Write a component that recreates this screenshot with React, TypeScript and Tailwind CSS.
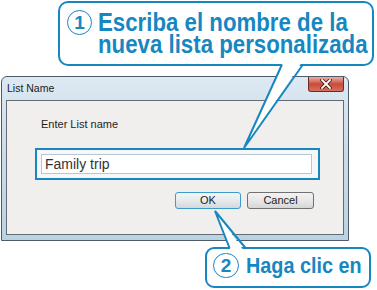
import React from 'react';

function Circled({ n, size }: { n: string; size: 'lg' | 'md' }) {
  return (
    <div
      className={
        size === 'lg'
          ? 'flex h-[25px] w-[25px] shrink-0 items-center justify-center rounded-full border-[1.5px] border-[#1787c2] text-[19px] font-bold leading-none text-[#1787c2]'
          : 'flex h-[25px] w-[26px] shrink-0 items-center justify-center rounded-full border-[1.5px] border-[#1787c2] text-[19px] font-bold leading-none text-[#1787c2]'
      }
    >
      {n}
    </div>
  );
}

function CloseButton() {
  return (
    <div className="flex h-[15px] w-[36px] items-center justify-center rounded-b-[3px] border border-t-0 border-[#6e2b23] bg-gradient-to-b from-[#eab0a5] via-[#c94a3b] to-[#d7705d]">
      <svg width="12" height="10" viewBox="0 0 12 10">
        <path d="M2 1 L10 9 M10 1 L2 9" stroke="#4a1a14" strokeWidth="3.4" strokeLinecap="square" />
        <path d="M2 1 L10 9 M10 1 L2 9" stroke="#ffffff" strokeWidth="1.8" strokeLinecap="square" />
      </svg>
    </div>
  );
}

function Dialog() {
  return (
    <div className="ml-[1px] mt-[76px] flex h-[165px] w-[348px] flex-col rounded-t-[6px] border border-[#4f5c68] bg-gradient-to-b from-[#dde9f2] via-[#c9dbe8] to-[#bad3e3]">
      {/* title bar */}
      <div className="flex h-[23px] items-start justify-between pl-[5px] pr-[4px]">
        <span className="mt-[5px] text-[10.5px] leading-[13px] text-[#1b1b1b]">List Name</span>
        <CloseButton />
      </div>

      {/* client area */}
      <div className="mx-[4px] flex-1 border border-[#666c73] bg-[#f0efed] pl-[28px] pt-[17px]">
        <p className="pl-[6px] text-[11px] leading-[13px] text-[#1e1e1e]">Enter List name</p>

        <div className="mt-[17px] w-[285px] border-2 border-[#1787c2] bg-[#f7f7f7] py-[4px] pl-[4px] pr-[6px]">
          <div className="flex h-[20px] items-center border border-[#b8c7d3] bg-white pl-[3px] text-[14px] text-[#333333]">
            Family trip
          </div>
        </div>

        <div className="mt-[12px] flex gap-[6px] pl-[140px]">
          <button className="flex h-[17px] w-[66px] items-center justify-center rounded-[3px] border border-[#3d9bc9] bg-gradient-to-b from-[#f4f6f7] via-[#e7eaec] to-[#d4d8dc] text-[11px] leading-none text-[#1e1e1e]">
            OK
          </button>
          <button className="flex h-[17px] w-[67px] items-center justify-center rounded-[3px] border border-[#707070] bg-gradient-to-b from-[#f3f3f3] via-[#e8e8e8] to-[#d6d6d6] text-[11px] leading-none text-[#1e1e1e]">
            Cancel
          </button>
        </div>
      </div>
      <div className="h-[5px]" />
    </div>
  );
}

export default function App() {
  return (
    <div className="relative h-[290px] w-[377px] overflow-hidden bg-white font-['Liberation_Sans',Arial,sans-serif]">
      <Dialog />

      {/* callout 1 */}
      <div className="absolute left-[58px] top-[1px] flex h-[65px] w-[316px] items-start rounded-[10px] border-2 border-[#1787c2] bg-white pl-[7px] pt-[7px]">
        <Circled n="1" size="lg" />
        <div className="ml-[6px] mt-[2px] origin-left scale-x-[0.89] whitespace-nowrap text-[25px] font-bold leading-[21.6px] text-[#1787c2]">
          Escriba el nombre de la
          <br />
          nueva lista personalizada
        </div>
      </div>

      {/* callout 2 */}
      <div className="absolute left-[205px] top-[247px] flex h-[41px] w-[166px] items-start rounded-[9px] border-2 border-[#1787c2] bg-white pl-[6px] pt-[4px]">
        <Circled n="2" size="md" />
        <div className="ml-[7px] mt-[2px] origin-left scale-x-90 whitespace-nowrap text-[22px] font-bold leading-[22px] text-[#1787c2]">
          Haga clic en
        </div>
      </div>

      {/* callout tails */}
      <svg className="pointer-events-none absolute left-0 top-0" width="377" height="290" viewBox="0 0 377 290">
        <polygon points="283,62 244,148 302,62" fill="#ffffff" />
        <polyline points="282,64.5 244,148 303,64.5" fill="none" stroke="#1787c2" strokeWidth="2" />
        <polygon points="231,251 215,211 244,251" fill="#ffffff" />
        <polyline points="229.5,248 215,211 245.5,248" fill="none" stroke="#1787c2" strokeWidth="2" />
      </svg>
    </div>
  );
}
